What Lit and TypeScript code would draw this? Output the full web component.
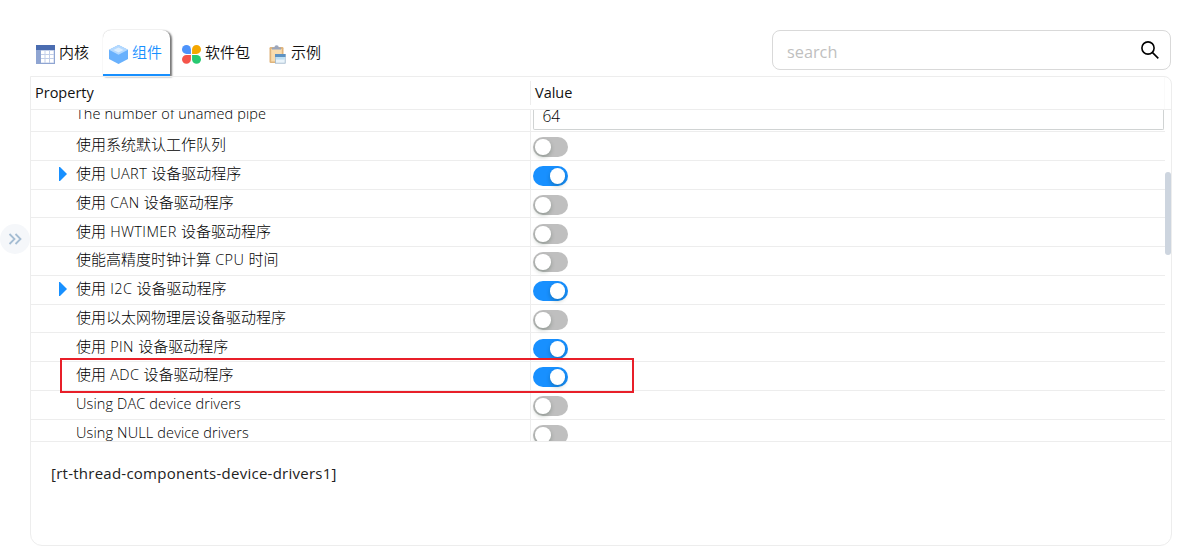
import { LitElement, html, css, svg, nothing } from "lit";
import { customElement, property } from "lit/decorators.js";

interface Row {
  label: string;
  on: boolean;
  expandable?: boolean;
  height: number;
  low?: boolean;
}

const ROWS: Row[] = [
  { label: "使用系统默认工作队列", on: false, height: 29 },
  { label: "使用 UART 设备驱动程序", on: true, expandable: true, height: 29 },
  { label: "使用 CAN 设备驱动程序", on: false, height: 28 },
  { label: "使用 HWTIMER 设备驱动程序", on: false, height: 29, low: true },
  { label: "使能高精度时钟计算 CPU 时间", on: false, height: 29 },
  { label: "使用 I2C 设备驱动程序", on: true, expandable: true, height: 29 },
  { label: "使用以太网物理层设备驱动程序", on: false, height: 28 },
  { label: "使用 PIN 设备驱动程序", on: true, height: 29, low: true },
  { label: "使用 ADC 设备驱动程序", on: true, height: 29 },
  { label: "Using DAC device drivers", on: false, height: 29 },
  { label: "Using NULL device drivers", on: false, height: 29 },
];

const tableIcon = svg`<svg width="19" height="19" viewBox="0 0 19 19">
  <rect width="19" height="19" fill="#8fa5d2"/><rect width="19" height="5" fill="#4a6cb0"/>
  <rect x="5" y="5" width="13" height="13" fill="#c3cfe8"/>
  <g fill="#fff"><rect x="5" y="6" width="3.5" height="3"/><rect x="9.5" y="6" width="3.5" height="3"/><rect x="14" y="6" width="3.5" height="3"/>
  <rect x="5" y="10" width="3.5" height="3"/><rect x="9.5" y="10" width="3.5" height="3"/><rect x="14" y="10" width="3.5" height="3"/>
  <rect x="5" y="14" width="3.5" height="3.5"/><rect x="9.5" y="14" width="3.5" height="3.5"/><rect x="14" y="14" width="3.5" height="3.5"/></g></svg>`;
const cubeIcon = svg`<svg width="19" height="19" viewBox="0 0 19 19">
  <path d="M9.5 0 19 4.8V14L9.5 19 0 14V4.8Z" fill="#69b1fd"/>
  <path d="M9.5 0 19 4.8 9.5 9.8 0 4.8Z" fill="#b4d9ff"/>
  <path d="M9.5 2.5 14.5 5 9.5 7.6 4.5 5Z" fill="#dceeff"/></svg>`;
const petalsIcon = svg`<svg width="19" height="19" viewBox="0 0 20 20">
  <path d="M4.7 0A4.7 4.7 0 0 1 9.4 4.7V9.4H4.7A4.7 4.7 0 0 1 4.7 0Z" fill="#4d93fb"/>
  <path d="M15.3 0A4.7 4.7 0 0 1 15.3 9.4H10.6V4.7A4.7 4.7 0 0 1 15.3 0Z" fill="#f5a700"/>
  <path d="M4.7 10.4H9.4V15.2A4.7 4.7 0 1 1 4.7 10.4Z" fill="#f5544a"/>
  <path d="M10.6 10.4H15.3A4.7 4.7 0 1 1 10.6 15.2Z" fill="#27c971"/></svg>`;
const clipIcon = svg`<svg width="17" height="19" viewBox="0 0 17 19">
  <rect x=".5" y="2" width="14" height="16" rx="1.2" fill="#dfb47c"/>
  <rect x="2.2" y="4" width="10.6" height="12.5" fill="#f8dcae"/>
  <path d="M3 4.6V2.4H5.4A2.2 2.2 0 0 1 9.8 2.4H12V4.6Z" fill="#9aa6bd"/>
  <rect x="6.4" y="9.4" width="9.8" height="8.8" fill="#eaf4fb" stroke="#9bb3c9" stroke-width=".8"/>
  <rect x="6" y="9" width="10.5" height="3" fill="#5c92c2"/>
  <rect x="6.8" y="12" width="9" height="2.6" fill="#bfe0f3"/></svg>`;

@customElement("toggle-switch")
class ToggleSwitch extends LitElement {
  @property({ type: Boolean, reflect: true }) on = false;
  static styles = css`
    :host { display: flex; width: 35px; height: 20px; box-sizing: border-box; border-radius: 10px; background: #bfbfbf; padding: 2px; align-items: center; }
    :host([on]) { background: #1890ff; justify-content: flex-end; padding-right: 3px; }
    .knob { width: 15.5px; height: 15.5px; border-radius: 50%; background: #fff; box-shadow: 0 2px 4px rgba(0, 35, 11, 0.25); }
  `;
  render() {
    return html`<div class="knob"></div>`;
  }
}

@customElement("app-root")
class AppRoot extends LitElement {
  static styles = css`
    :host { display: block; position: relative; width: 1201px; height: 556px; overflow: hidden; background: #fff; box-sizing: border-box; padding: 30px 29px 0 30px; font-family: "Open Sans", "Noto Sans CJK SC", sans-serif; font-size: 15px; color: #111; line-height: 20px; }
    svg { display: block; flex: none; }
    .top { display: flex; height: 46px; justify-content: space-between; }
    .tabs { display: flex; font-weight: 350; }
    .tab { display: flex; box-sizing: border-box; height: 46px; padding-top: 12px; gap: 4px; white-space: nowrap; }
    .tab svg { margin-top: 3px; }
    .kernel { width: 73px; padding-left: 6px; }
    .active { width: 67px; padding-left: 6px; color: #1890ff; border-bottom: 2px solid #1890ff; border-radius: 8px 8px 0 0; box-shadow: 2px 1px 2px #777, 0 0 1px #bbb; }
    .package { padding-left: 12px; gap: 4px; width: 99px; }
    .sample { gap: 5px; }
    .search { display: flex; box-sizing: border-box; width: 399px; height: 40px; border: 1px solid #d9d9d9; border-radius: 8px; justify-content: space-between; padding: 10px 10px 0 14px; font-size: 16.3px; line-height: 22px; color: #bfbfbf; margin-right: 1px; }
    .panel { position: relative; box-sizing: border-box; width: 1142px; height: 470px; border: 1px solid #ededed; border-radius: 0 8px 12px 12px; }
    .head { display: flex; height: 32px; border-bottom: 1px solid #ededed; font-weight: 500; align-items: center; font-size: 14.5px; }
    .head .name { width: 500px; box-sizing: border-box; padding-left: 4px; border-right: 1px solid #ededed; height: 24px; line-height: 23px; }
    .head .val { padding-left: 4px; height: 24px; line-height: 23px; flex: 1; }
    .head .end { width: 6px; height: 32px; border-left: 1px solid #fafafa; }
    .body { height: 331px; overflow: hidden; border-bottom: 1px solid #ededed; }
    .row { display: flex; box-sizing: border-box; width: 1134px; border-bottom: 1px solid #ededed; font-weight: 300; color: #000; }
    .row .name { display: flex; width: 500px; box-sizing: border-box; border-right: 1px solid #ededed; white-space: pre; }
    .row .name .text { padding-top: 2px; }
    .gutter { width: 45px; box-sizing: border-box; padding: 6px 0 0 27px; }
    .latin { font-size: 14.5px; letter-spacing: 0.13px; font-weight: 330; }
    .mixed { font-size: 14.5px; letter-spacing: 0.4px; }
    .row .value { padding: 5px 0 0 2px; flex: 1; }
    .low .name .text { padding-top: 3px; }
    .low .value { padding-top: 6px; }
    .pipe { height: 22px; }
    .pipe .name .text { padding: 0; margin-top: -6px; }
    .pipe .value { padding: 0 1px 0 2px; }
    .input { height: 20px; box-sizing: border-box; border: 1px solid #d0d3d3; border-top: 0; border-radius: 0 0 2px 2px; padding-left: 8.5px; line-height: 13px; font-size: 15.5px; font-weight: 350; }
    .thumb { position: absolute; right: 0; top: 95px; width: 6px; height: 83px; border-radius: 3px; background: #cdd5df; }
    .note { padding: 21px 0 0 20px; font-size: 15px; letter-spacing: 0.25px; font-weight: 400; color: #222; }
    .mark { position: absolute; left: 60px; top: 358px; width: 574px; height: 35px; box-sizing: border-box; border: 2px solid #e81f29; }
    .expand { position: absolute; left: 0; top: 224px; width: 30px; height: 30px; border-radius: 50%; background: #f5f7fa; }
  `;

  private label(text: string) {
    if (/^[A-Za-z]/.test(text)) return html`<span class="latin">${text}</span>`;
    return text.split(/([A-Za-z0-9 ]+)/).map((part) => (/^[A-Za-z0-9 ]/.test(part) ? html`<span class="mixed">${part}</span>` : part));
  }

  private row(r: Row) {
    return html`<div class="row ${r.low ? "low" : ""}" style="height:${r.height}px"><div class="name"><div class="gutter">${r.expandable
      ? svg`<svg width="9" height="14" viewBox="0 0 9 14"><path d="M1 0H2L9 7 2 14H1Z" fill="#1890ff"/></svg>`
      : nothing}</div><div class="text">${this.label(r.label)}</div></div><div class="value"><toggle-switch ?on=${r.on}></toggle-switch></div></div>`;
  }

  render() {
    return html`
      <div class="top">
        <div class="tabs">
          <div class="tab kernel">${tableIcon}<span>内核</span></div>
          <div class="tab active">${cubeIcon}<span>组件</span></div>
          <div class="tab package">${petalsIcon}<span>软件包</span></div>
          <div class="tab sample">${clipIcon}<span>示例</span></div>
        </div>
        <div class="search"><span>search</span><svg width="20" height="20" viewBox="0 0 20 20" fill="none" stroke="#000" stroke-width="1.6"><circle cx="8" cy="7" r="6.1"/><path d="m12.3 11.4 6 6"/></svg></div>
      </div>
      <div class="panel">
        <div class="head"><div class="name">Property</div><div class="val">Value</div><div class="end"></div></div>
        <div class="body">
          <div class="row pipe"><div class="name"><div class="gutter"></div><div class="text latin">The number of unamed pipe</div></div><div class="value"><div class="input">64</div></div></div>
          ${ROWS.map((r) => this.row(r))}
        </div>
        <div class="note">[rt-thread-components-device-drivers1]</div>
        <div class="thumb"></div>
      </div>
      <div class="mark"></div>
      <div class="expand"><svg width="30" height="30" viewBox="0 0 30 30" fill="none" stroke="#a5bdd3" stroke-width="1.8"><path d="m9.5 10 5 5-5 5M15.5 10l5 5-5 5"/></svg></div>
    `;
  }
}
